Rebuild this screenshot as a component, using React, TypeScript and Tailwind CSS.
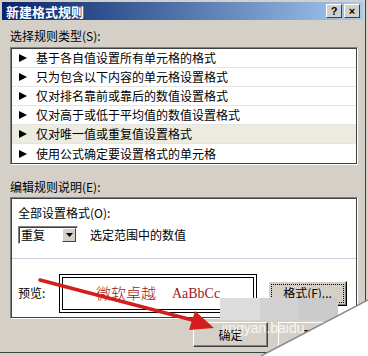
import React from "react";

const rules = [
  "基于各自值设置所有单元格的格式",
  "只为包含以下内容的单元格设置格式",
  "仅对排名靠前或靠后的数值设置格式",
  "仅对高于或低于平均值的数值设置格式",
  "仅对唯一值或重复值设置格式",
  "使用公式确定要设置格式的单元格",
];

const cjk = "font-['SimSun','Noto_Sans_CJK_SC',sans-serif]";

const Arrow = () => (
  <svg width="8" height="8" viewBox="0 0 8 8" className="shrink-0">
    <polygon points="0,0 8,4 0,8" fill="#000" />
  </svg>
);

const TitleButton = ({ label }: { label: string }) => (
  <div className="flex h-[14px] w-[16px] items-center justify-center border border-t-white border-l-white border-r-[#404040] border-b-[#404040] bg-[#d4d0c8] font-['Liberation_Sans',sans-serif] text-[11px] leading-none font-bold text-black">
    {label}
  </div>
);

const Button = ({ label, className = "" }: { label: string; className?: string }) => (
  <div
    className={`flex h-[25px] w-[75px] items-center justify-center border border-t-white border-l-white border-r-[#404040] border-b-[#404040] bg-[#d4d0c8] text-[12px] text-black shadow-[inset_-1px_-1px_0_#808080] ${className}`}
  >
    {label}
  </div>
);

export default function App() {
  return (
    <div className={`relative h-[356px] w-[368px] overflow-hidden bg-[#d4d0c8] ${cjk}`}>
      <div className="flex h-[353px] w-[366px] flex-col border-r border-b border-[#404040] px-[2px] pt-[2px]">
        {/* title bar */}
        <div className="flex h-[18px] items-center justify-between bg-gradient-to-r from-[#0a246a] to-[#a6caf0] pr-[3px] pl-[4px]">
          <span className="text-[13px] leading-none font-bold text-white">新建格式规则</span>
          <div className="flex gap-[2px]">
            <TitleButton label="?" />
            <TitleButton label="×" />
          </div>
        </div>

        <div className="flex flex-col pr-[5px] pl-[8px]">
          <div className="mt-[8px] h-[16px] text-[12px] leading-[16px] text-black">选择规则类型(S):</div>

          {/* rule list */}
          <div className="mt-[3px] border border-t-[#808080] border-l-[#808080] border-r-white border-b-white">
            <div className="border border-[#404040] bg-white">
              {rules.map((r, i) => (
                <div
                  key={r}
                  className={`flex h-[19px] items-center gap-[9px] pl-[7px] text-[12px] text-black ${
                    i < rules.length - 1 ? "border-b border-[#e4e4e4]" : ""
                  } ${i === 4 ? "bg-[#ebebe0]" : ""}`}
                >
                  <Arrow />
                  <span>{r}</span>
                </div>
              ))}
            </div>
          </div>

          <div className="mt-[14px] h-[16px] text-[12px] leading-[16px] text-black">编辑规则说明(E):</div>

          {/* description panel */}
          <div className="mt-[2px] border border-t-[#808080] border-l-[#808080] border-r-white border-b-white">
            <div className="flex h-[120px] flex-col border border-[#404040] bg-white">
              <div className="flex h-[60px] flex-col border-b border-[#c8d0dc] pt-[6px] pl-[6px]">
                <div className="text-[12px] leading-[16px] text-black">全部设置格式(O):</div>
                <div className="mt-[5px] flex items-center">
                  <div className="flex h-[18px] w-[60px] items-center justify-between border border-t-[#808080] border-l-[#808080] border-r-white border-b-white bg-white shadow-[inset_1px_1px_0_#404040]">
                    <span className="pl-[2px] text-[12px] leading-none text-black">重复</span>
                    <div className="mr-[1px] flex h-[14px] w-[14px] items-center justify-center border border-t-white border-l-white border-r-[#404040] border-b-[#404040] bg-[#d4d0c8]">
                      <svg width="7" height="4" viewBox="0 0 7 4">
                        <polygon points="0,0 7,0 3.5,4" fill="#000" />
                      </svg>
                    </div>
                  </div>
                  <span className="ml-[12px] text-[12px] text-black">选定范围中的数值</span>
                </div>
              </div>
              <div className="flex flex-1 items-center pt-[10px] pl-[6px]">
                <span className="w-[41px] text-[12px] text-black">预览:</span>
                <div className="flex h-[39px] w-[198px] items-center justify-center border border-black p-[2px]">
                  <div className="flex h-full w-full items-center justify-center gap-[16px] border border-black">
                    <span className="text-[15px] font-light text-[#a01818]">微软卓越</span>
                    <span className="font-['Liberation_Serif',serif] text-[14px] text-[#a01818]">AaBbCc</span>
                  </div>
                </div>
                <Button
                  label="格式(F)..."
                  className="ml-[11px] h-[23px] w-[79px] border-r-black border-b-black outline-1 outline-offset-[-4px] outline-black outline-dotted"
                />
              </div>
            </div>
          </div>

          <div className="mt-[3px] flex justify-end gap-[10px] pr-[5px]">
            <Button label="确定" />
            <Button label="取消" />
          </div>
        </div>
      </div>

      {/* watermark block */}
      <div className="absolute top-[298px] left-[220px] flex h-[22px] w-[118px]">
        <div className="h-full w-[40px] bg-[#dcdcdc]" />
        <div className="h-full w-[38px] bg-[#d2d2d2]" />
        <div className="h-full w-[40px] bg-[#cbcbcb]" />
      </div>
      <div className="absolute top-[321px] left-[222px] font-['Liberation_Sans',sans-serif] text-[14px] leading-none text-white/80">
        jingyan.baidu
      </div>

      {/* red arrow and curled corner */}
      <svg className="absolute top-0 left-0" width="368" height="356" viewBox="0 0 368 356">
        <line x1="40" y1="280" x2="196" y2="321" stroke="#d41e1e" strokeWidth="3.5" strokeLinecap="round" />
        <polygon points="214,328 189,330 195,311" fill="#d41e1e" />
        <polygon points="368,300 368,356 261,356" fill="#ffffff" />
        <line x1="368" y1="300" x2="261" y2="356" stroke="#8a8a8a" strokeWidth="1.5" />
      </svg>
    </div>
  );
}
